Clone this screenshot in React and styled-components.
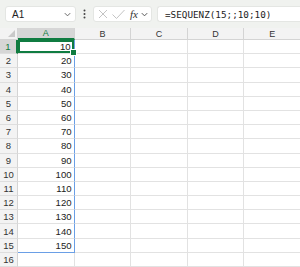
import React from 'react'
import styled, { createGlobalStyle } from 'styled-components'

const GlobalStyle = createGlobalStyle`
  html, body {
    margin: 0;
    background: #ffffff;
    font-family: "Liberation Sans", Arial, sans-serif;
    overflow: hidden;
  }
`

const Bar = styled.div`
  height: 28px;
  box-sizing: border-box;
  padding: 6px 0 0 5px;
  background: #f0f2ef;
  display: flex;
  align-items: flex-start;
`

const Box = styled.div`
  height: 16px;
  box-sizing: border-box;
  background: #ffffff;
  border: 1px solid #e4e6e3;
  border-radius: 3px;
  display: flex;
  align-items: center;
`

const NameBox = styled(Box)`
  width: 71px;
  justify-content: space-between;
  padding: 0 3px 0 6px;
  font-size: 10px;
  color: #222;
`

const Grip = styled.div`
  width: 17px;
  height: 16px;
  display: flex;
  align-items: center;
  justify-content: center;
`

const FuncBox = styled(Box)`
  width: 59px;
  padding-left: 3px;
  gap: 2px;
`

const Fx = styled.span`
  font-family: "Liberation Serif", serif;
  font-style: italic;
  font-size: 11px;
  color: #333;
  margin-left: 2px;
`

const FormulaBox = styled(Box)`
  flex: 1;
  margin-left: 5px;
  border-right: none;
  border-radius: 3px 0 0 3px;
  padding-left: 7px;
  font-family: "DejaVu Sans Mono", "Liberation Mono", monospace;
  font-size: 9.3px;
  color: #222;
`

const Sheet = styled.div`
  display: grid;
  grid-template-columns: 18px repeat(5, 56.6px);
  grid-template-rows: 12px repeat(16, 14.2px);
  font-size: 9.6px;
`

const Corner = styled.div`
  background: #f3f3f3;
  border-right: 1px solid #d4d4d4;
  border-bottom: 1px solid #d4d4d4;
  position: relative;
  &::after {
    content: '';
    position: absolute;
    right: 2px;
    bottom: 2px;
    border-left: 7px solid transparent;
    border-bottom: 7px solid #c9c9c9;
  }
`

const ColHead = styled.div`
  background: ${p => (p.$active ? '#d6d6d6' : '#f3f3f3')};
  color: ${p => (p.$active ? '#107c41' : '#333')};
  border-right: 1px solid #d4d4d4;
  border-bottom: ${p => (p.$active ? '2px solid #107c41' : '1px solid #d4d4d4')};
  display: flex;
  align-items: center;
  justify-content: center;
  font-size: 9px;
`

const RowHead = styled.div`
  background: ${p => (p.$active ? '#d6d6d6' : '#f3f3f3')};
  color: ${p => (p.$active ? '#107c41' : '#333')};
  border-right: ${p => (p.$active ? '2px solid #107c41' : '1px solid #d4d4d4')};
  border-bottom: 1px solid #dedede;
  display: flex;
  align-items: center;
  justify-content: center;
  font-size: 9.5px;
`

const Cell = styled.div`
  position: relative;
  border-right: 1px solid #e2e2e2;
  border-bottom: 1px solid #e2e2e2;
  display: flex;
  align-items: center;
  justify-content: flex-end;
  padding-right: 2px;
  color: #222;
  ${p => p.$spill && `
    border-right-color: #6a9fe6;
    ${p.$last ? 'border-bottom-color: #6a9fe6;' : ''}
  `}
  ${p => p.$active && `
    box-shadow: inset 0 0 0 2px #107c41;
    padding-right: 3px;
  `}
`

const Handle = styled.span`
  position: absolute;
  right: -3px;
  bottom: -3px;
  width: 5px;
  height: 5px;
  background: #107c41;
  border: 1px solid #fff;
  z-index: 2;
`

const Chevron = ({ color = '#666' }) => (
  <svg width="9" height="9" viewBox="0 0 10 10">
    <path d="M2 3.5 L5 6.5 L8 3.5" fill="none" stroke={color} strokeWidth="1.1" />
  </svg>
)

const cols = ['A', 'B', 'C', 'D', 'E']

export default function App() {
  const rows = Array.from({ length: 16 }, (_, i) => i + 1)
  return (
    <>
      <GlobalStyle />
      <Bar>
        <NameBox>
          <span>A1</span>
          <Chevron />
        </NameBox>
        <Grip>
          <svg width="3" height="10" viewBox="0 0 3 10">
            <circle cx="1.5" cy="1.5" r="1" fill="#444" />
            <circle cx="1.5" cy="5" r="1" fill="#444" />
            <circle cx="1.5" cy="8.5" r="1" fill="#444" />
          </svg>
        </Grip>
        <FuncBox>
          <svg width="12" height="12" viewBox="0 0 12 12">
            <path d="M2 2 L10 10 M10 2 L2 10" stroke="#c4c4c4" strokeWidth="1" />
          </svg>
          <svg width="15" height="12" viewBox="0 0 15 12">
            <path d="M1.5 6.5 L5.5 10.5 L13.5 2" fill="none" stroke="#c4c4c4" strokeWidth="1" />
          </svg>
          <Fx>fx</Fx>
          <Chevron color="#555" />
        </FuncBox>
        <FormulaBox>=SEQUENZ(15;;10;10)</FormulaBox>
      </Bar>
      <Sheet>
        <Corner />
        {cols.map(c => (
          <ColHead key={c} $active={c === 'A'}>{c}</ColHead>
        ))}
        {rows.map(r => (
          <React.Fragment key={r}>
            <RowHead $active={r === 1}>{r}</RowHead>
            {cols.map(c => {
              const inSpill = c === 'A' && r <= 15
              return (
                <Cell
                  key={c}
                  $spill={inSpill}
                  $last={inSpill && r === 15}
                  $active={c === 'A' && r === 1}
                >
                  {inSpill ? r * 10 : ''}
                  {c === 'A' && r === 1 && <Handle />}
                </Cell>
              )
            })}
          </React.Fragment>
        ))}
      </Sheet>
    </>
  )
}
